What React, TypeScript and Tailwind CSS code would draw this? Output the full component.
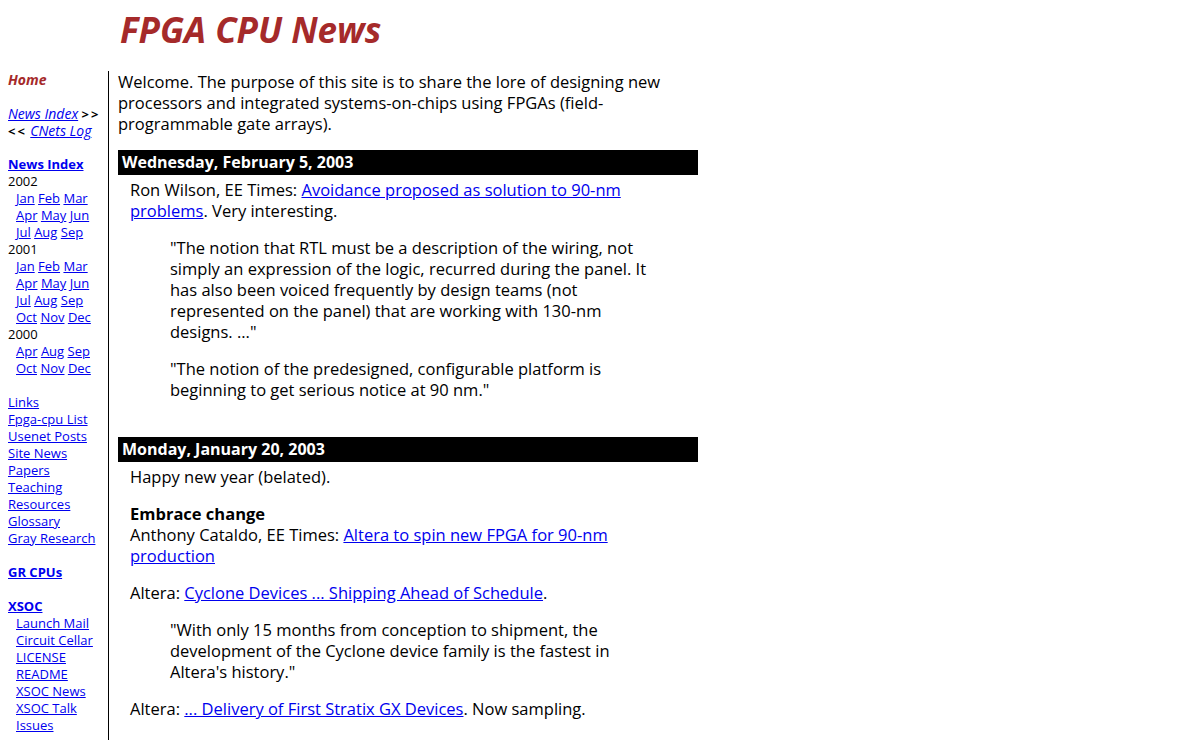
const link = "text-[#0000ee] underline";

function Side({ children, indent, bold }: { children: React.ReactNode; indent?: boolean; bold?: boolean }) {
  return <div className={`${indent ? "pl-2" : ""} ${bold ? "font-bold" : ""} h-[17px] whitespace-nowrap`}>{children}</div>;
}

function Months({ list }: { list: string[] }) {
  return (
    <Side indent>
      {list.map((m, i) => (
        <span key={m}>
          {i > 0 && " "}
          <a href="#" className={link}>{m}</a>
        </span>
      ))}
    </Side>
  );
}

function Links({ items, indent }: { items: string[]; indent?: boolean }) {
  return (
    <>
      {items.map((t) => (
        <Side key={t} indent={indent}>
          <a href="#" className={link}>{t}</a>
        </Side>
      ))}
    </>
  );
}

function DateBar({ children }: { children: React.ReactNode }) {
  return <div className="bg-black text-white font-bold text-[16px] px-1 py-[2px] leading-[21px]">{children}</div>;
}

export default function App() {
  return (
    <div className="min-h-[740px] bg-white text-black font-['Open_Sans','Liberation_Sans',sans-serif]">
      <h1 className="pl-[120px] pt-[10px] h-[71px] text-[35px] leading-[40px] font-bold italic text-[#a52a2a]">
        FPGA CPU News
      </h1>
      <div className="flex">
        <div className="w-[109px] shrink-0 border-r border-black pl-2 text-[13px] leading-[17px] h-[669px] overflow-hidden">
          <div className="h-[17px] font-bold italic text-[14px] text-[#a52a2a]">Home</div>
          <div className="h-[17px]" />
          <Side>
            <a href="#" className={`${link} italic text-[14px]`}>News Index</a>{" "}
            <b className="tracking-[2px]">&gt;&gt;</b>
          </Side>
          <Side>
            <b className="tracking-[2px]">&lt;&lt;</b>{" "}
            <a href="#" className={`${link} italic text-[14px]`}>CNets Log</a>
          </Side>
          <div className="h-[17px]" />
          <Side bold>
            <a href="#" className={link}>News Index</a>
          </Side>
          <Side>2002</Side>
          <Months list={["Jan", "Feb", "Mar"]} />
          <Months list={["Apr", "May", "Jun"]} />
          <Months list={["Jul", "Aug", "Sep"]} />
          <Side>2001</Side>
          <Months list={["Jan", "Feb", "Mar"]} />
          <Months list={["Apr", "May", "Jun"]} />
          <Months list={["Jul", "Aug", "Sep"]} />
          <Months list={["Oct", "Nov", "Dec"]} />
          <Side>2000</Side>
          <Months list={["Apr", "Aug", "Sep"]} />
          <Months list={["Oct", "Nov", "Dec"]} />
          <div className="h-[17px]" />
          <Links items={["Links", "Fpga-cpu List", "Usenet Posts", "Site News", "Papers", "Teaching", "Resources", "Glossary", "Gray Research"]} />
          <div className="h-[17px]" />
          <Side bold>
            <a href="#" className={link}>GR CPUs</a>
          </Side>
          <div className="h-[17px]" />
          <Side bold>
            <a href="#" className={link}>XSOC</a>
          </Side>
          <Links indent items={["Launch Mail", "Circuit Cellar", "LICENSE", "README", "XSOC News", "XSOC Talk", "Issues"]} />
        </div>

        <div className="w-[580px] ml-[9px] text-[16.5px] leading-[21px]">
          <p>
            Welcome. The purpose of this site is to share the lore of designing new processors and integrated
            systems-on-chips using FPGAs (field-programmable gate arrays).
          </p>

          <div className="mt-[16px]">
            <DateBar>Wednesday, February 5, 2003</DateBar>
            <div className="px-3 pt-1">
              <p>
                Ron Wilson, EE Times: <a href="#" className={link}>Avoidance proposed as solution to 90-nm problems</a>.
                Very interesting.
              </p>
              <blockquote className="mt-4 ml-10 mr-7">
                <p>
                  "The notion that RTL must be a description of the wiring, not simply an expression of the logic,
                  recurred during the panel. It has also been voiced frequently by design teams (not represented on the
                  panel) that are working with 130-nm designs. ..."
                </p>
                <p className="mt-4">
                  "The notion of the predesigned, configurable platform is beginning to get serious notice at 90 nm."
                </p>
              </blockquote>
            </div>
          </div>

          <div className="mt-[37px]">
            <DateBar>Monday, January 20, 2003</DateBar>
            <div className="px-3 pt-1">
              <p>Happy new year (belated).</p>
              <p className="mt-4">
                <b>Embrace change</b>
                <br />
                Anthony Cataldo, EE Times: <a href="#" className={link}>Altera to spin new FPGA for 90-nm production</a>
              </p>
              <p className="mt-4">
                Altera: <a href="#" className={link}>Cyclone Devices ... Shipping Ahead of Schedule</a>.
              </p>
              <blockquote className="mt-4 ml-10 mr-7">
                <p>
                  "With only 15 months from conception to shipment, the development of the Cyclone device family is the
                  fastest in Altera's history."
                </p>
              </blockquote>
              <p className="mt-4">
                Altera: <a href="#" className={link}>... Delivery of First Stratix GX Devices</a>. Now sampling.
              </p>
              <p className="mt-4">Xilinx: Virtex-II Pro shipping.</p>
            </div>
          </div>
        </div>
      </div>
    </div>
  );
}
